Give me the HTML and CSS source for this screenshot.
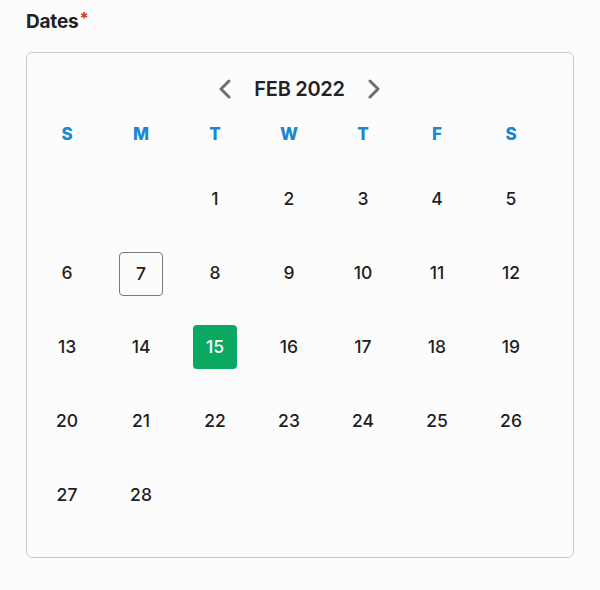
FILE: index.html
```html
<!DOCTYPE html>
<html>
<head>
<meta charset="utf-8">
<link rel="stylesheet" href="styles.css">
</head>
<body>
<div class="field">
  <div class="label">Dates<span class="req">*</span></div>
  <div class="calendar">
    <div class="cal-head">
      <button class="nav" aria-label="Previous month">
        <svg width="14" height="20" viewBox="0 0 14 20"><path d="M11 2 L3 10 L11 18" fill="none" stroke="#6e6e6e" stroke-width="3" stroke-linecap="round" stroke-linejoin="round"/></svg>
      </button>
      <div class="month">FEB 2022</div>
      <button class="nav" aria-label="Next month">
        <svg width="14" height="20" viewBox="0 0 14 20"><path d="M3 2 L11 10 L3 18" fill="none" stroke="#6e6e6e" stroke-width="3" stroke-linecap="round" stroke-linejoin="round"/></svg>
      </button>
    </div>
    <div class="weekdays">
      <span>S</span><span>M</span><span>T</span><span>W</span><span>T</span><span>F</span><span>S</span>
    </div>
    <div class="days">
      <span class="day empty"></span><span class="day empty"></span>
      <span class="day">1</span><span class="day">2</span><span class="day">3</span><span class="day">4</span><span class="day">5</span>
      <span class="day">6</span><span class="day today">7</span><span class="day">8</span><span class="day">9</span><span class="day">10</span><span class="day">11</span><span class="day">12</span>
      <span class="day">13</span><span class="day">14</span><span class="day selected">15</span><span class="day">16</span><span class="day">17</span><span class="day">18</span><span class="day">19</span>
      <span class="day">20</span><span class="day">21</span><span class="day">22</span><span class="day">23</span><span class="day">24</span><span class="day">25</span><span class="day">26</span>
      <span class="day">27</span><span class="day">28</span>
    </div>
  </div>
</div>
</body>
</html>
```
FILE: styles.css
```css
html, body {
  margin: 0;
  padding: 0;
  background: #fdfcfd;
}
body {
  font-family: Inter, "Noto Sans", sans-serif;
  color: #1f1f1f;
}
.field {
  padding: 10px 26px 0 26px;
}
.label {
  font-size: 19px;
  font-weight: 650;
  line-height: 24px;
  height: 24px;
  letter-spacing: -0.2px;
  color: #222;
}
.req {
  color: #cf3f1b;
  font-size: 16px;
  font-weight: 800;
  vertical-align: top;
  position: relative;
  top: -4px;
  margin-left: 1px;
}
.calendar {
  margin-top: 18px;
  width: 548px;
  height: 506px;
  box-sizing: border-box;
  border: 1.5px solid #c8ccd1;
  border-radius: 6px;
  padding: 22px 0 0 3px;
}
.cal-head {
  display: flex;
  align-items: center;
  justify-content: center;
  height: 28px;
  gap: 22px;
  padding-right: 4px;
}
.nav {
  border: none;
  background: none;
  padding: 0;
  width: 14px;
  height: 20px;
  display: flex;
}
.month {
  font-size: 20px;
  font-weight: 600;
  color: #222;
  letter-spacing: -0.3px;
}
.weekdays {
  display: grid;
  grid-template-columns: repeat(7, 74px);
  margin-top: 21px;
  height: 20px;
  line-height: 20px;
}
.weekdays span {
  text-align: center;
  font-size: 17px;
  font-weight: 800;
  color: #1b87d0;
}
.days {
  display: grid;
  grid-template-columns: repeat(7, 74px);
  grid-auto-rows: 74px;
  margin-top: 18px;
}
.day {
  display: flex;
  align-items: center;
  justify-content: center;
  width: 44px;
  height: 44px;
  justify-self: center;
  align-self: center;
  box-sizing: border-box;
  border-radius: 4px;
  font-size: 17.5px;
  font-weight: 500;
  color: #1f1f1f;
  padding-bottom: 2px;
}
.day.today {
  border: 1.5px solid #7a7a7a;
  position: relative;
  top: 1px;
}
.day.selected {
  background: #0ba862;
  color: #fff;
}
```
